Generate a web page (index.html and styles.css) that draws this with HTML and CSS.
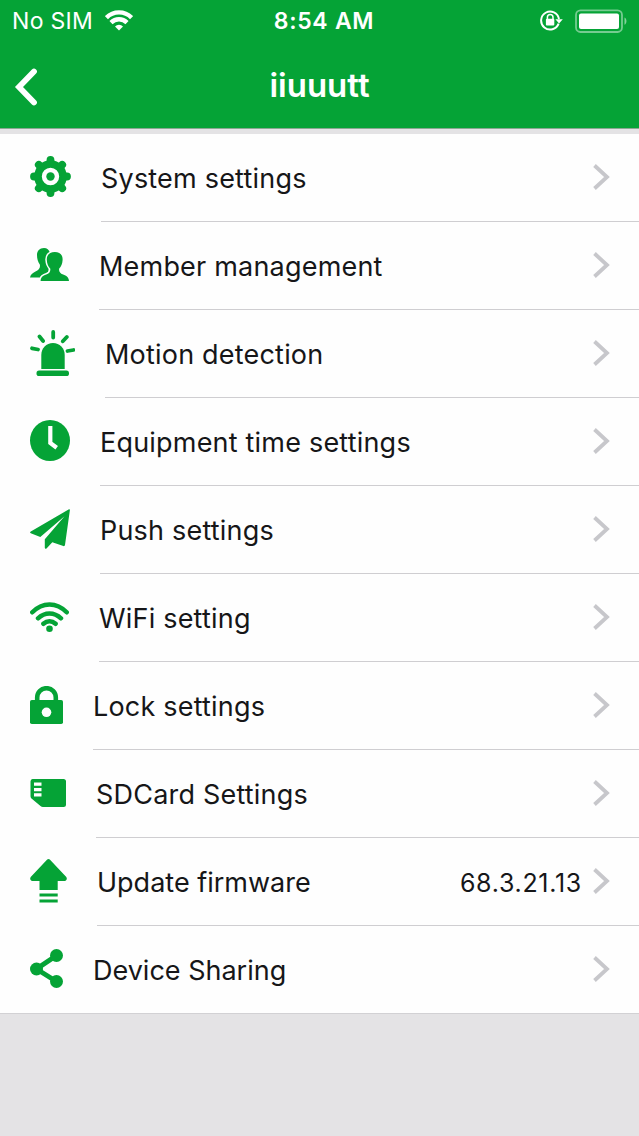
FILE: index.html
```html
<!DOCTYPE html>
<html lang="en">

<head>
    <meta charset="UTF-8">
    <meta name="viewport" content="width=device-width, initial-scale=1.0">
    <title>Device settings</title>
    <link rel="stylesheet" href="styles.css">
</head>

<body>
    <header class="header">
        <div class="status">
            <div class="status-left">
                <span>No SIM</span>
                <svg width="28" height="21" viewBox="0 0 28 21" fill="none" stroke="#fff" stroke-width="4.400">
                    <path d="M1.4 7.6a17.8 17.8 0 0 1 25.2 0" />
                    <path d="M6 12.6a11.3 11.3 0 0 1 16 0" />
                    <path d="M14 20.5l-4-4.1a5.7 5.7 0 0 1 8 0z" fill="#fff" stroke="none" />
                </svg>
            </div>
            <span class="status-time">8:54 AM</span>
            <div class="status-right">
                <svg width="23" height="21" viewBox="0 0 23 21">
                    <path d="M18.600 13.600a9 9 0 1 1 .4-4.600" fill="none" stroke="#fff" stroke-width="2" />
                    <path d="M15.400 9.200h7.400l-3.700 4.400z" fill="#fff" />
                    <path d="M7.400 9V7.300a2.800 2.800 0 0 1 5.600 0V9" fill="none" stroke="#fff" stroke-width="1.500" />
                    <rect x="5.900" y="8.800" width="8.400" height="6.600" rx="1" fill="#fff" />
                </svg>
                <svg width="53" height="24" viewBox="0 0 53 24">
                    <rect x="1" y="1.400" width="46" height="21.600" rx="4.500" fill="none" stroke="#fff" stroke-opacity=".45" stroke-width="1.800" />
                    <rect x="4" y="4.400" width="40" height="15.600" rx="2" fill="#fff" />
                    <path d="M49.500 8.600c2.600 1 2.600 6.200 0 7.200z" fill="#fff" fill-opacity=".5" />
                </svg>
            </div>
        </div>
        <div class="nav">
            <svg width="24" height="38" viewBox="0 0 24 38">
                <path d="M20 3.500L5 19l15 15.500" fill="none" stroke="#fff" stroke-width="5.800" stroke-linecap="round" />
            </svg>
            <h1 class="title">iiuuutt</h1>
        </div>
    </header>

    <ul class="list">
        <li class="item">
            <svg class="icon" width="41" height="41" viewBox="0 0 41 41">
                <circle cx="20.500" cy="20.500" r="12.500" fill="none" stroke="#05a336" stroke-width="7.600" />
                <circle cx="20.500" cy="20.500" r="4.200" />
                <path d="M20.500 4v2M20.500 35v2M4 20.500h2M35 20.500h2M8.800 8.800l1.400 1.400M30.800 30.800l1.400 1.400M32.200 8.800l-1.400 1.400M10.200 30.800l-1.400 1.400" fill="none" stroke="#05a336" stroke-width="7.800" stroke-linecap="round" />
            </svg>
            <div class="body"><span>System settings</span><svg class="arrow" width="17" height="28" viewBox="0 0 17 28"><path d="M1.500 2.500L14 14 1.500 25.500" /></svg></div>
        </li>
        <li class="item">
            <svg class="icon" width="39" height="33" viewBox="0 0 39 33">
                <path d="M14 0c-4.500 0-7 3-7 7 0 4 1 7 2.800 9.500.8 3-1 5.500-4.300 7C2.500 25 .5 26.500 0 29.500h10c1-3 7-3 8.500-6L20 5C19 1.500 17 0 14 0z" />
                <path d="M24.800 4c-5 0-8.300 3-8 8 .2 4 1.500 6.500 3.400 8.500.6 3-.8 5-4 6-3.500 1-5.300 2.500-5.600 6.500H39c-.4-4-2.500-5.500-5.900-6.500-3.200-1-4.500-3-3.900-6 1.900-2 3.200-4.500 3.400-8.500.3-5-2.800-8-7.800-8z" stroke="#fefefe" stroke-width="3" paint-order="stroke" />
            </svg>
            <div class="body"><span>Member management</span><svg class="arrow" width="17" height="28" viewBox="0 0 17 28"><path d="M1.500 2.500L14 14 1.500 25.500" /></svg></div>
        </li>
        <li class="item">
            <svg class="icon" width="45" height="46" viewBox="0 0 45 46">
                <path d="M11.300 39V25c0-7 5-12 11.700-12s11.700 5 11.700 12v14z" />
                <rect x="6.500" y="40.600" width="32.500" height="5.400" rx="2.600" />
                <path d="M23.200 2v5.500M9.500 6.500l3.600 4.500M36.800 7l-4 4.300M2 18.300l6 1.200M37.500 21l6-1" fill="none" stroke="#05a336" stroke-width="3.800" stroke-linecap="round" />
            </svg>
            <div class="body"><span>Motion detection</span><svg class="arrow" width="17" height="28" viewBox="0 0 17 28"><path d="M1.500 2.500L14 14 1.500 25.500" /></svg></div>
        </li>
        <li class="item">
            <svg class="icon" width="40" height="41" viewBox="0 0 40 41">
                <ellipse cx="20" cy="20.500" rx="20" ry="20.500" />
                <path d="M20.300 6v17l6.400 4.800" fill="none" stroke="#fefefe" stroke-width="4.200" />
            </svg>
            <div class="body"><span>Equipment time settings</span><svg class="arrow" width="17" height="28" viewBox="0 0 17 28"><path d="M1.500 2.500L14 14 1.500 25.500" /></svg></div>
        </li>
        <li class="item">
            <svg class="icon" width="40" height="40" viewBox="0 0 40 40">
                <path d="M39 .2Q40 0 39.900 1L35 36q-.3 1.500-1.700 1l-11-3.800-5.800 6.300q-1.500 1-1.700-.7v-8.600L34.500 7.200 10.300 28 .8 24.200q-1.500-.8 0-1.800z" />
            </svg>
            <div class="body"><span>Push settings</span><svg class="arrow" width="17" height="28" viewBox="0 0 17 28"><path d="M1.500 2.500L14 14 1.500 25.500" /></svg></div>
        </li>
        <li class="item">
            <svg class="icon" width="39" height="30" viewBox="0 0 39 30">
                <path d="M2.300 10.300c10-10.500 24.400-10.500 34.400 0M8 16.300c6.800-6.500 16.200-6.500 23 0M13.400 21.800c3.800-3.400 8.400-3.400 12.200 0" fill="none" stroke="#05a336" stroke-width="4.500" stroke-linecap="round" />
                <circle cx="19.500" cy="26.700" r="3.300" />
            </svg>
            <div class="body"><span>WiFi setting</span><svg class="arrow" width="17" height="28" viewBox="0 0 17 28"><path d="M1.500 2.500L14 14 1.500 25.500" /></svg></div>
        </li>
        <li class="item">
            <svg class="icon" width="33" height="38" viewBox="0 0 33 38">
                <path d="M7.200 15v-3.500a9.300 9.300 0 0 1 18.600 0V15" fill="none" stroke="#05a336" stroke-width="4.600" />
                <rect y="14" width="33" height="24" rx="1.800" />
                <circle cx="16.500" cy="26.300" r="4.800" fill="#fefefe" />
            </svg>
            <div class="body"><span>Lock settings</span><svg class="arrow" width="17" height="28" viewBox="0 0 17 28"><path d="M1.500 2.500L14 14 1.500 25.500" /></svg></div>
        </li>
        <li class="item">
            <svg class="icon" width="36" height="28" viewBox="0 0 36 28">
                <path d="M2.500 0h31Q36 0 36 2.500v23q0 2.500-2.500 2.500H13q-1.500 0-2.500-1L1.200 19.300Q.5 18.500.5 17V2.500Q.5 0 2.500 0z" />
                <path d="M4 3.500h7.500v3.200H4zM4 9h7.500v3.200H4zM4 14.300h7.500v3.200H4z" fill="#fefefe" />
            </svg>
            <div class="body"><span>SDCard Settings</span><svg class="arrow" width="17" height="28" viewBox="0 0 17 28"><path d="M1.500 2.500L14 14 1.500 25.500" /></svg></div>
        </li>
        <li class="item">
            <svg class="icon" width="37" height="44" viewBox="0 0 37 44">
                <path d="M17.200.6q1.300-1 2.600 0L36.300 18q1.500 2.800-1.200 4H27.700v9H9.500v-9H1.900Q-.8 20.800.7 18z" />
                <path d="M9.500 34.500h18.200v3H9.500zM9.500 40.600h18.200v3H9.500z" />
            </svg>
            <div class="body tight"><span>Update firmware</span><span class="value">68.3.21.13</span><svg class="arrow" width="17" height="28" viewBox="0 0 17 28"><path d="M1.500 2.500L14 14 1.500 25.500" /></svg></div>
        </li>
        <li class="item">
            <svg class="icon" width="33" height="39" viewBox="0 0 33 39">
                <path d="M26.500 6.500L6.500 20l20 12.500" fill="none" stroke="#05a336" stroke-width="5" />
                <circle cx="26.500" cy="6.500" r="6.500" />
                <circle cx="6.500" cy="20" r="6.500" />
                <circle cx="26.500" cy="32.500" r="6.500" />
            </svg>
            <div class="body tight"><span>Device Sharing</span><svg class="arrow" width="17" height="28" viewBox="0 0 17 28"><path d="M1.500 2.500L14 14 1.500 25.500" /></svg></div>
        </li>
    </ul>
</body>

</html>
```
FILE: styles.css
```css
* {
    box-sizing: border-box;
}

body {
    margin: 0;
    background-color: #e4e3e5;
    font-family: Inter, "Liberation Sans", sans-serif;
    color: #161618;
}

.header {
    height: 129px;
    background-color: #05a336;
    border-bottom: 1px solid #8ba892;
    color: #fff;
}

/* status bar */
.status {
    display: grid;
    grid-template-columns: 1fr auto 1fr;
    align-items: center;
    height: 41px;
    padding: 0 11px 0 12px;
    font-size: 23px;
}

.status-left,
.status-right {
    display: flex;
    align-items: center;
    gap: 12px;
}

.status-left {
    letter-spacing: 0.3px;
}

.status-right {
    justify-content: flex-end;
}

.status-time {
    padding-left: 8px;
    font-weight: 600;
    letter-spacing: 0.7px;
}

/* title bar */
.nav {
    display: grid;
    grid-template-columns: 1fr auto 1fr;
    align-items: center;
    height: 87px;
    padding: 4px 14px 0;
}

.title {
    margin: 0 0 4px;
    font-size: 33px;
    font-weight: 600;
    line-height: 40px;
}

/* settings list */
.list {
    list-style: none;
    margin: 5px 0 0;
    padding: 0;
    background-color: #fefefe;
    border-bottom: 1px solid #d2d1d4;
}

.item {
    display: flex;
    align-items: center;
    height: 88px;
    padding-left: 30px;
}

.icon {
    flex: none;
    margin: 0 30px 3px 0;
    fill: #05a336;
}

.body {
    flex: 1;
    display: flex;
    align-items: center;
    height: 88px;
    padding: 2px 29px 0 0;
    border-bottom: 1px solid #cfced1;
    font-size: 27px;
    letter-spacing: 0.2px;
}

.tight {
    letter-spacing: 0;
}

.item:last-child,
.item:last-child .body {
    height: 87px;
    border-bottom: 0;
}

.value {
    margin-left: auto;
    font-size: 25px;
    letter-spacing: 0.7px;
}

.arrow {
    margin: 0 0 4px auto;
    fill: none;
    stroke: #c7c7cb;
    stroke-width: 3.8;
}

.value + .arrow {
    margin-left: 11px;
}
```
